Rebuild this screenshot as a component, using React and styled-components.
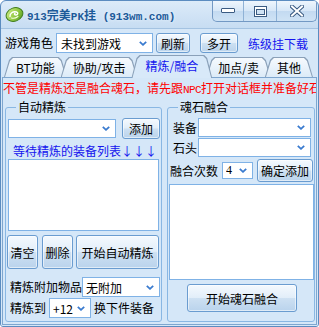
import React from 'react';
import styled, { createGlobalStyle } from 'styled-components';

const Global = createGlobalStyle`
  html, body { margin: 0; padding: 0; background: #ffffff; }
  body { font-family: "Noto Sans CJK SC", "Noto Sans", sans-serif; font-size: 12px; color: #000; }
  * { box-sizing: border-box; }
`;

const Window = styled.div`
  width: 319px;
  height: 327px;
  display: flex;
  flex-direction: column;
  border: 1px solid #5b8cc0;
  border-radius: 6px 6px 3px 3px;
  background: linear-gradient(#dcebf9, #c6dcf2 28px, #c6dcf2);
  overflow: hidden;
`;

const TitleBar = styled.div`
  height: 27px;
  flex: none;
  display: flex;
  align-items: flex-start;
`;

const TitleLeft = styled.div`
  display: flex;
  align-items: center;
  height: 27px;
  padding-left: 4px;
  gap: 3px;
`;

const TitleText = styled.div`
  font-family: "Liberation Mono", "Noto Sans CJK SC", monospace;
  font-weight: bold;
  font-size: 11px;
  color: #1c5a99;
  white-space: nowrap;
  text-shadow: 0 0 3px #eef6ff;
`;

const Cjk = styled.span`
  font-family: "Noto Sans CJK SC", sans-serif;
  font-size: 12px;
`;

const Caption = styled.div`
  margin-left: auto;
  margin-right: 1px;
  display: flex;
  height: 21px;
  border: 1px solid #7399c4;
  border-top: none;
  border-radius: 0 0 5px 5px;
  background: linear-gradient(#eef6fd, #d6e7f7 50%, #c3daf1 51%, #cfe3f5);
  overflow: hidden;
`;

const CapBtn = styled.div`
  width: ${p => p.$w}px;
  display: flex;
  align-items: center;
  justify-content: center;
  border-left: ${p => (p.$first ? 'none' : '1px solid #8fb2d6')};
`;

const Client = styled.div`
  flex: 1;
  display: flex;
  flex-direction: column;
  background: #d5e7f8;
  border-top: 1px solid #a4c3e2;
  padding-top: 4px;
`;

const TopRow = styled.div`
  display: flex;
  align-items: center;
  height: 20px;
  padding-left: 4px;
`;

const Label = styled.span`
  white-space: nowrap;
  line-height: 14px;
  padding-left: ${p => p.$pl || 0}px;
  margin-left: ${p => p.$ml || 0}px;
`;

const LinkText = styled.span`
  color: #1414ee;
  margin-left: 10px;
  white-space: nowrap;
`;

const SelectBox = styled.div`
  width: ${p => p.$w}px;
  height: ${p => p.$h}px;
  margin-left: ${p => p.$ml || 0}px;
  flex: none;
  display: flex;
  align-items: center;
  background: #ffffff;
  border: 1px solid #7fb2e6;
  padding: 0 5px 0 ${p => p.$pl ?? 3}px;
  font-family: ${p => (p.$serif ? '"Liberation Serif", "Noto Sans CJK SC", serif' : 'inherit')};
  white-space: nowrap;
  & > span { flex: 1; overflow: hidden; }
`;

const Button = styled.div`
  width: ${p => p.$w}px;
  height: ${p => p.$h}px;
  margin-left: ${p => p.$ml || 0}px;
  flex: none;
  display: flex;
  align-items: center;
  justify-content: center;
  white-space: nowrap;
  border: 1px solid #6a9cd0;
  border-radius: 3px;
  background: linear-gradient(#f4f9fe, #e2eef9 48%, #cde0f2 52%, #bad3ec);
  box-shadow: inset 0 0 0 1px rgba(255, 255, 255, 0.55);
`;

const TabStrip = styled.div`
  position: relative;
  z-index: 2;
  display: flex;
  align-items: flex-end;
  height: 22px;
  margin-top: 2px;
  padding-left: 3px;
`;

const tabShape = 'polygon(0 100%, 5px 3px, 8px 0, calc(100% - 8px) 0, calc(100% - 5px) 3px, 100% 100%)';

const Tab = styled.div`
  position: relative;
  z-index: ${p => (p.$active ? 3 : 1)};
  height: ${p => (p.$active ? 23 : 20)}px;
  margin-bottom: ${p => (p.$active ? -1 : 0)}px;
  margin-right: -6px;
  padding: 0 ${p => (p.$active ? 14 : 12)}px ${p => (p.$active ? 2 : 0)}px;
  display: flex;
  align-items: center;
  white-space: nowrap;
  color: ${p => (p.$active ? '#1414ee' : '#000')};
  &::before {
    content: '';
    position: absolute;
    inset: 0;
    background: #8aa0b8;
    clip-path: ${tabShape};
    z-index: -2;
  }
  &::after {
    content: '';
    position: absolute;
    inset: 1px 1px 0 1px;
    background: ${p => (p.$active ? '#d8e9f9' : 'linear-gradient(#f6fafe, #dcebf8)')};
    clip-path: ${tabShape};
    z-index: -1;
  }
`;

const TabPanel = styled.div`
  flex: 1;
  display: flex;
  flex-direction: column;
  margin: 0 1px 1px 1px;
  border: 1px solid #7ea6cf;
  background: #d5e7f8;
  min-height: 0;
`;

const Warning = styled.div`
  color: #ff0000;
  line-height: 14px;
  margin-top: 3px;
  white-space: nowrap;
  overflow: hidden;
`;

const HalfWidth = styled.span`
  font-family: "Liberation Mono", monospace;
  font-size: 11px;
  letter-spacing: -0.6px;
`;

const Groups = styled.div`
  flex: 1;
  display: flex;
  gap: 5px;
  padding: 3px 1px 2px 2px;
  min-height: 0;
`;

const Group = styled.fieldset`
  margin: 0;
  padding: 0;
  min-width: 0;
  width: ${p => (p.$w ? `${p.$w}px` : 'auto')};
  flex: ${p => (p.$w ? 'none' : '1')};
  border: 1px solid #89b7e3;
  border-radius: 3px;
  display: flex;
  flex-direction: column;
`;

const Legend = styled.legend`
  margin-left: 10px;
  padding: 0 2px;
  line-height: 14px;
`;

const Row = styled.div`
  display: flex;
  align-items: center;
  height: ${p => p.$h}px;
  margin-top: ${p => p.$mt || 0}px;
  padding-left: ${p => p.$pl || 0}px;
  flex: none;
`;

const Hint = styled.div`
  color: #1414ee;
  line-height: 14px;
  margin-top: 5px;
  padding-left: 7px;
  white-space: nowrap;
`;

const ListBox = styled.div`
  width: ${p => p.$w}px;
  height: ${p => p.$h}px;
  margin-top: ${p => p.$mt || 0}px;
  margin-left: ${p => p.$ml || 0}px;
  flex: none;
  background: #ffffff;
  border: 1px solid #7fb2e6;
`;

const Chevron = () => (
  <svg width="8" height="5" viewBox="0 0 8 5">
    <path d="M0.8 0.8 L4 3.8 L7.2 0.8" fill="none" stroke="#3a7bcf" strokeWidth="1.8" />
  </svg>
);

const Select = ({ text, ...rest }) => (
  <SelectBox {...rest}>
    <span>{text}</span>
    <Chevron />
  </SelectBox>
);

const AppIcon = () => (
  <svg width="19" height="17" viewBox="0 0 19 17">
    <defs>
      <linearGradient id="gem" x1="0" y1="0" x2="1" y2="1">
        <stop offset="0" stopColor="#d6f08e" />
        <stop offset="0.6" stopColor="#8cc63e" />
        <stop offset="1" stopColor="#4d9420" />
      </linearGradient>
    </defs>
    <ellipse cx="9.5" cy="8.5" rx="8.6" ry="6.6" transform="rotate(-22 9.5 8.5)" fill="url(#gem)" stroke="#3f7d1c" strokeWidth="1" />
    <path d="M5 10.5 C4.5 7.5 8 5 11.5 6 C13.5 6.6 13 9 11 9 C9.5 9 9 8 10 7.5" fill="none" stroke="#ffffff" strokeWidth="1.4" strokeLinecap="round" />
    <path d="M6.5 12 C8.5 12.5 11 12 13 10.5" fill="none" stroke="#f4ffe0" strokeWidth="1.1" strokeLinecap="round" />
  </svg>
);

const MinGlyph = () => (
  <svg width="15" height="6" viewBox="0 0 15 6">
    <rect x="0.5" y="0.5" width="13" height="4" rx="0.5" fill="#ffffff" stroke="#3a5b82" />
  </svg>
);

const MaxGlyph = () => (
  <svg width="13" height="11" viewBox="0 0 13 11">
    <rect x="0.5" y="0.5" width="12" height="10" fill="#ffffff" stroke="#3a5b82" />
    <rect x="2.5" y="3.5" width="8" height="5" fill="#cfe2f4" stroke="#3a5b82" />
  </svg>
);

const CloseGlyph = () => (
  <svg width="14" height="12" viewBox="0 0 14 12">
    <path d="M2 1.5 L12 10.5 M12 1.5 L2 10.5" stroke="#3a5b82" strokeWidth="4" strokeLinecap="square" />
    <path d="M2 1.5 L12 10.5 M12 1.5 L2 10.5" stroke="#ffffff" strokeWidth="2" strokeLinecap="square" />
  </svg>
);

export default function App() {
  return (
    <>
      <Global />
      <Window>
        <TitleBar>
          <TitleLeft>
            <AppIcon />
            <TitleText>
              913<Cjk>完美</Cjk>PK<Cjk>挂</Cjk> (913wm.com)
            </TitleText>
          </TitleLeft>
          <Caption>
            <CapBtn $w={30} $first>
              <MinGlyph />
            </CapBtn>
            <CapBtn $w={33}>
              <MaxGlyph />
            </CapBtn>
            <CapBtn $w={40}>
              <CloseGlyph />
            </CapBtn>
          </Caption>
        </TitleBar>
        <Client>
          <TopRow>
            <Label>游戏角色</Label>
            <Select text="未找到游戏" $w={97} $h={20} $ml={3} $pl={4} />
            <Button $w={34} $h={20} $ml={3}>刷新</Button>
            <Button $w={38} $h={20} $ml={10}>多开</Button>
            <LinkText>练级挂下载</LinkText>
          </TopRow>
          <TabStrip>
            <Tab>BT功能</Tab>
            <Tab>协助/攻击</Tab>
            <Tab $active>精炼/融合</Tab>
            <Tab>加点/卖</Tab>
            <Tab>其他</Tab>
          </TabStrip>
          <TabPanel>
            <Warning>
              不管是精炼还是融合魂石，请先跟<HalfWidth>NPC</HalfWidth>打开对话框并准备好石头
            </Warning>
            <Groups>
              <Group $w={157}>
                <Legend>自动精炼</Legend>
                <Row $h={21} $mt={4} $pl={2}>
                  <Select text="" $w={108} $h={19} />
                  <Button $w={38} $h={21} $ml={6}>添加</Button>
                </Row>
                <Hint>等待精炼的装备列表↓↓↓</Hint>
                <ListBox $w={151} $h={72} $mt={1} $ml={2} />
                <Row $h={34} $mt={4} $pl={1}>
                  <Button $w={31} $h={34}>清空</Button>
                  <Button $w={31} $h={34} $ml={4}>删除</Button>
                  <Button $w={83} $h={34} $ml={3}>开始自动精炼</Button>
                </Row>
                <Row $h={20} $mt={8}>
                  <Label $pl={4}>精炼附加物品</Label>
                  <Select text="无附加" $w={78} $h={20} />
                </Row>
                <Row $h={20} $mt={1}>
                  <Label $pl={4}>精炼到</Label>
                  <Select text="+12" $w={42} $h={20} $ml={3} />
                  <Label $ml={3}>换下件装备</Label>
                </Row>
              </Group>
              <Group>
                <Legend>魂石融合</Legend>
                <Row $h={19} $mt={4}>
                  <Label $pl={5}>装备</Label>
                  <Select text="" $w={113} $h={19} $ml={1} />
                </Row>
                <Row $h={19} $mt={1}>
                  <Label $pl={5}>石头</Label>
                  <Select text="" $w={113} $h={19} $ml={1} />
                </Row>
                <Row $h={23} $mt={2}>
                  <Label $pl={2}>融合次数</Label>
                  <Select text="4" $w={31} $h={17} $ml={4} $serif />
                  <Button $w={56} $h={23} $ml={4}>确定添加</Button>
                </Row>
                <ListBox $w={145} $h={96} $mt={2} $ml={1} />
                <Row $h={28} $mt={4} $pl={19}>
                  <Button $w={110} $h={28}>开始魂石融合</Button>
                </Row>
              </Group>
            </Groups>
          </TabPanel>
        </Client>
      </Window>
    </>
  );
}
